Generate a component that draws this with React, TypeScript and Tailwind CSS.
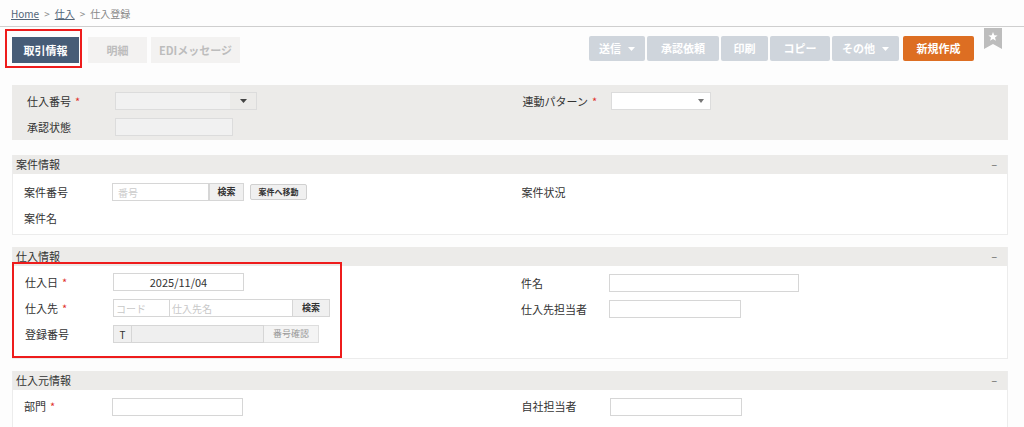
import type { ReactNode } from "react";

const font = { fontFamily: '"Noto Sans CJK JP", "Noto Sans", sans-serif' };

function Req() {
  return <span className="ml-1 text-[#e0312c]">*</span>;
}

function Caret({ color = "#fff" }: { color?: string }) {
  return (
    <svg width="7" height="4" viewBox="0 0 7 4">
      <path d="M0 0H7L3.5 4Z" fill={color} />
    </svg>
  );
}

function Label({ children, required }: { children: ReactNode; required?: boolean }) {
  return (
    <div className="flex w-[88px] shrink-0 items-center text-[11px] text-[#333]">
      {children}
      {required && <Req />}
    </div>
  );
}

function TextBox({ w, children, className = "" }: { w: string; children?: ReactNode; className?: string }) {
  return (
    <div className={`h-[18px] ${w} border border-[#d6d6d6] bg-white text-[10px] ${className}`}>{children}</div>
  );
}

function SectionHeader({ title }: { title: string }) {
  return (
    <div className="flex h-[19px] items-center justify-between bg-[#ecebe9] pl-[3px] pr-[10px] text-[11px] text-[#333]">
      <span>{title}</span>
      <span className="text-[10px] text-[#666]">−</span>
    </div>
  );
}

function GrayBtn({ children, caret, w }: { children: ReactNode; caret?: boolean; w: string }) {
  return (
    <div className={`flex h-[25px] ${w} items-center justify-center gap-[7px] rounded-[2px] bg-[#cfd5dc] text-[11px] font-bold text-white`}>
      <span>{children}</span>
      {caret && <Caret />}
    </div>
  );
}

export default function App() {
  return (
    <div className="h-[427px] w-[1024px] overflow-hidden bg-[#fdfdfd]" style={font}>
      <div className="flex h-[27px] items-center border-b border-[#cfcfcf] px-[11px] text-[10px] text-[#888]">
        <span className="text-[#526478] underline">Home</span>
        <span className="mx-[5px]">&gt;</span>
        <span className="text-[#526478] underline">仕入</span>
        <span className="mx-[5px]">&gt;</span>
        <span>仕入登録</span>
      </div>

      <div className="relative flex h-[50px] items-start pl-[5px] pr-[50px]">
        <div className="mt-[2px] border-2 border-[#ee1c1c] pb-[3px] pl-[5px] pr-[1px] pt-[6px]">
          <div className="flex h-[26px] w-[67px] items-center justify-center bg-[#475c77] text-[11px] font-bold text-white">
            取引情報
          </div>
        </div>
        <div className="ml-[6px] mt-[10px] flex h-[26px] w-[59px] items-center justify-center bg-[#f3f2f1] text-[11px] font-bold text-[#bdbdbd]">
          明細
        </div>
        <div className="ml-[4px] mt-[10px] flex h-[26px] w-[89px] items-center justify-center bg-[#f3f2f1] text-[11px] font-bold text-[#bdbdbd]">
          EDIメッセージ
        </div>
        <div className="ml-auto mt-[9px] flex gap-[2px]">
          <GrayBtn w="w-[56px]" caret>送信</GrayBtn>
          <GrayBtn w="w-[72px]">承認依頼</GrayBtn>
          <GrayBtn w="w-[47px]">印刷</GrayBtn>
          <GrayBtn w="w-[60px]">コピー</GrayBtn>
          <GrayBtn w="w-[67px]" caret>その他</GrayBtn>
          <div className="ml-[2px] flex h-[25px] w-[71px] items-center justify-center rounded-[2px] bg-[#dd6e22] text-[11px] font-bold text-white">
            新規作成
          </div>
        </div>
        <svg className="absolute right-[22px] top-[1px]" width="18" height="21" viewBox="0 0 18 21">
          <path d="M0 0H18V21L9 16L0 21Z" fill="#bdbdbd" />
          <path d="M9 4L10.3 7.2L13.6 7.4L11 9.6L11.9 12.8L9 11L6.1 12.8L7 9.6L4.4 7.4L7.7 7.2Z" fill="#fff" />
        </svg>
      </div>

      <div className="ml-[12px] mr-[16px] mt-[8px] grid h-[55px] grid-cols-2 bg-[#ecebe9] pl-[15px] pt-[7px]">
        <div className="flex flex-col gap-[8px]">
          <div className="flex items-center">
            <Label required>仕入番号</Label>
            <div className="flex h-[18px] w-[142px] border border-[#dcdcdc] bg-[#f1f1f1]">
              <div className="flex-1" />
              <div className="flex w-[26px] items-center justify-center bg-[#ecebe9]">
                <Caret color="#444" />
              </div>
            </div>
          </div>
          <div className="flex items-center">
            <Label>承認状態</Label>
            <div className="h-[18px] w-[118px] border border-[#dcdcdc] bg-[#f1f1f1]" />
          </div>
        </div>
        <div className="flex flex-col pl-[5px]">
          <div className="flex items-center">
            <Label required>連動パターン</Label>
            <div className="flex h-[18px] w-[100px] items-center justify-end border border-[#dcdcdc] bg-white pr-[6px]">
              <svg width="6" height="4" viewBox="0 0 6 4">
                <path d="M0 0H6L3 4Z" fill="#777" />
              </svg>
            </div>
          </div>
        </div>
      </div>

      <div className="ml-[12px] mr-[16px] mt-[15px] border border-t-0 border-[#ececec]">
        <SectionHeader title="案件情報" />
        <div className="grid h-[60px] grid-cols-2 bg-white pl-[11px] pt-[9px]">
          <div className="flex flex-col gap-[8px]">
            <div className="flex items-center">
              <Label>案件番号</Label>
              <TextBox w="w-[97px]" className="flex items-center pl-[5px] text-[#ccc]">番号</TextBox>
              <div className="flex h-[18px] w-[35px] items-center justify-center border border-[#d6d6d6] bg-[#f0f0f0] text-[9px] font-bold text-[#333]">
                検索
              </div>
              <div className="ml-[6px] flex h-[16px] w-[57px] items-center justify-center rounded-[2px] border border-[#d0d0d0] bg-[#f0f0f0] text-[8px] font-bold text-[#333]">
                案件へ移動
              </div>
            </div>
            <div className="flex h-[18px] items-center">
              <Label>案件名</Label>
            </div>
          </div>
          <div className="flex flex-col pl-[6px]">
            <div className="flex h-[18px] items-center">
              <Label>案件状況</Label>
            </div>
          </div>
        </div>
      </div>

      <div className="ml-[12px] mr-[16px] mt-[12px] border border-t-0 border-[#ececec]">
        <SectionHeader title="仕入情報" />
        <div className="grid h-[92px] grid-cols-2 bg-white">
          <div className="relative -ml-px -mt-[4px] h-[96px] w-[330px] border-2 border-[#ee1c1c] pl-[11px] pt-[9px]">
            <div className="flex flex-col gap-[8px]">
              <div className="flex items-center">
                <Label required>仕入日</Label>
                <TextBox w="w-[131px]" className="flex items-center justify-center text-[11px] text-[#333]">2025/11/04</TextBox>
              </div>
              <div className="flex items-center">
                <Label required>仕入先</Label>
                <TextBox w="w-[57px]" className="flex items-center pl-[2px] text-[#c8c8c8]">コード</TextBox>
                <TextBox w="w-[123px]" className="flex items-center border-l-0 pl-[2px] text-[#c8c8c8]">仕入先名</TextBox>
                <div className="flex h-[18px] w-[37px] items-center justify-center border border-l-0 border-[#d6d6d6] bg-[#f0f0f0] text-[9px] font-bold text-[#333]">
                  検索
                </div>
              </div>
              <div className="flex items-center">
                <Label>登録番号</Label>
                <div className="flex h-[18px] w-[19px] items-center justify-center border border-[#d6d6d6] bg-[#f0f0f0] text-[10px] text-[#333]">
                  T
                </div>
                <div className="h-[18px] w-[132px] border border-l-0 border-[#d6d6d6] bg-[#efefef]" />
                <div className="flex h-[18px] w-[55px] items-center justify-center border border-l-0 border-[#dedede] bg-[#f4f4f4] text-[9px] text-[#999]">
                  番号確認
                </div>
              </div>
            </div>
          </div>
          <div className="flex flex-col gap-[8px] pl-[11px] pt-[8px]">
            <div className="flex items-center">
              <Label>件名</Label>
              <TextBox w="w-[190px]" />
            </div>
            <div className="flex items-center">
              <Label>仕入先担当者</Label>
              <TextBox w="w-[132px]" />
            </div>
          </div>
        </div>
      </div>

      <div className="ml-[12px] mr-[16px] mt-[12px] border border-t-0 border-[#ececec]">
        <SectionHeader title="仕入元情報" />
        <div className="grid h-[40px] grid-cols-2 bg-white pl-[11px] pt-[8px]">
          <div className="flex items-start">
            <Label required>部門</Label>
            <TextBox w="w-[131px]" />
          </div>
          <div className="flex items-start pl-[6px]">
            <Label>自社担当者</Label>
            <TextBox w="w-[132px]" />
          </div>
        </div>
      </div>
    </div>
  );
}
